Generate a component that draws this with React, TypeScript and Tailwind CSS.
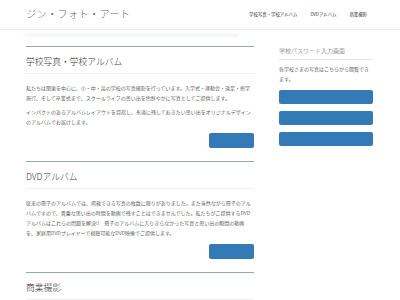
import React from 'react';

const font = { fontFamily: '"Noto Sans CJK JP", "Noto Sans", sans-serif' };

const sections = [
  {
    title: '学校写真・学校アルバム',
    paragraphs: [
      '私たちは関東を中心に、小・中・高の学校の写真撮影を行っています。入学式・運動会・遠足・修学旅行、そして卒業式まで、スクールライフの思い出を色鮮やかに写真としてご提供します。',
      'インパクトのあるアルバムレイアウトを目指し、永遠に残しておきたい思い出をオリジナルデザインのアルバムでお届けします。',
    ],
  },
  {
    title: 'DVDアルバム',
    paragraphs: [
      '従来の冊子のアルバムでは、掲載できる写真の枚数に限りがありました。また当然ながら冊子のアルバムですので、貴重な思い出の時間を動画で残すことはできませんでした。私たちがご提供するDVDアルバムはこれらの問題を解決!!　冊子のアルバムに入りきらなかった写真と思い出の瞬間の動画を、家庭用DVDプレイヤーで視聴可能なDVD映像でご提供します。',
    ],
  },
  { title: '商業撮影', paragraphs: [] },
];

export default function App() {
  return (
    <div className="w-[400px] h-[300px] overflow-hidden bg-white" style={font}>
      {/* Header */}
      <header className="h-[30px] border-b border-[#ececec] flex items-center justify-between pl-[26px] pr-[33px]">
        <div className="text-[10.2px] tracking-[0.3px] text-[#666] font-light leading-none">ジン・フォト・アート</div>
        <nav className="flex items-center gap-[13px] text-[4.4px] text-[#333] leading-none">
          <span>学校写真・学校アルバム</span>
          <span>DVDアルバム</span>
          <span>商業撮影</span>
        </nav>
      </header>

      <div className="px-[26px] pt-[3px]">
        <div className="h-[4px] w-[213px] bg-[#f7f7f7]" />
      </div>

      <div className="flex pl-[26px] pr-[27px] pt-[9px] gap-[25px]">
        {/* Main column */}
        <main className="w-[228px] flex flex-col">
          {sections.map((s) => (
            <section key={s.title} className="border-t border-[#8eaabb] pb-[13px]">
              <h2 className="pt-[8px] pb-[5px] text-[8.75px] leading-[13px] font-light text-[#333] border-b border-[#f1f1f1]">
                {s.title}
              </h2>
              {s.paragraphs.length > 0 && (
                <>
                  <div className="mt-[9px] flex flex-col gap-[4px] text-[5px] leading-[10px] text-[#666]">
                    {s.paragraphs.map((p, i) => (
                      <p key={i}>{p}</p>
                    ))}
                  </div>
                  <div className="flex justify-end mt-[6px]">
                    <button className="w-[45px] h-[15px] rounded-[2px] bg-[#337ab7]" />
                  </div>
                </>
              )}
            </section>
          ))}
        </main>

        {/* Sidebar */}
        <aside className="w-[94px] flex flex-col">
          <h3 className="text-[6px] leading-[10px] font-light text-[#555] pb-[3px] border-b border-[#e8e8e8]">
            学校パスワード入力画面
          </h3>
          <p className="mt-[4px] text-[5px] leading-[9.5px] text-[#666]">
            各学校さまの写真はこちらから閲覧できます。
          </p>
          <div className="mt-[7px] flex flex-col gap-[7px]">
            <button className="h-[14px] rounded-[2px] bg-[#337ab7]" />
            <button className="h-[14px] rounded-[2px] bg-[#337ab7]" />
            <button className="h-[14px] rounded-[2px] bg-[#337ab7]" />
          </div>
        </aside>
      </div>
    </div>
  );
}
